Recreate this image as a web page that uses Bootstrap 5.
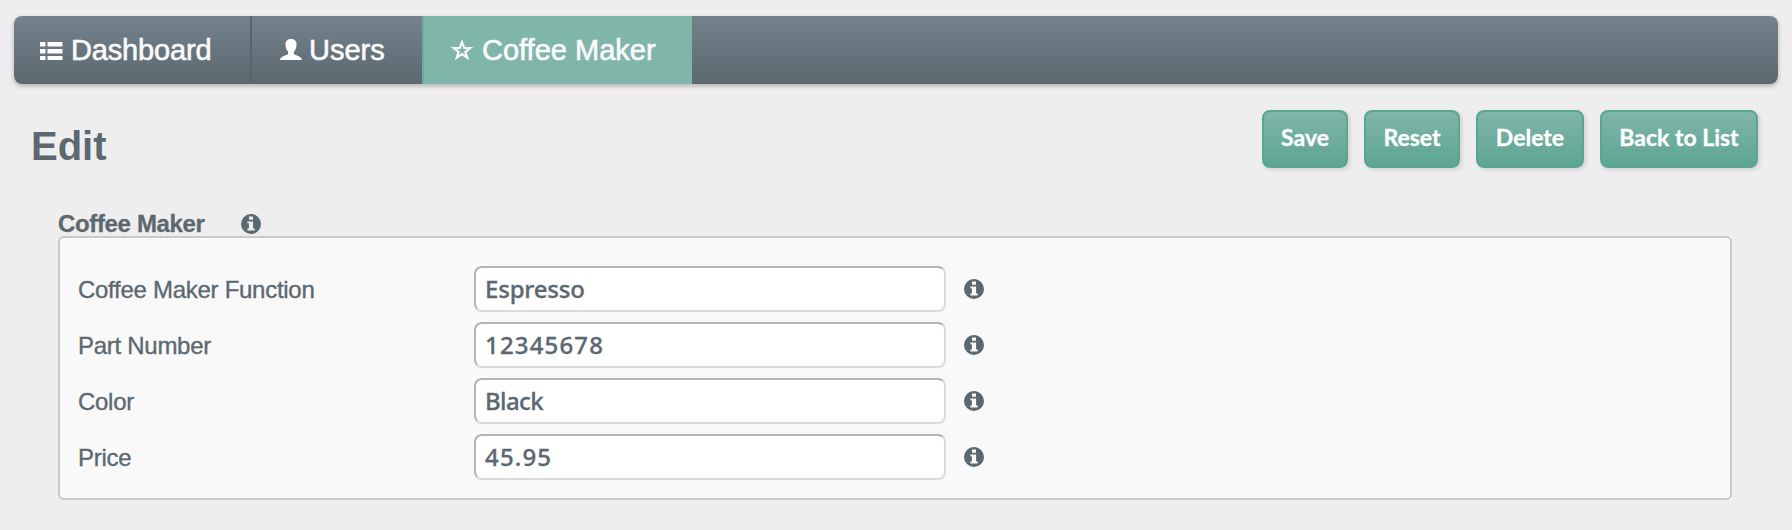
<!DOCTYPE html>
<html lang="en">
<head>
<meta charset="utf-8">
<meta name="viewport" content="width=device-width, initial-scale=1">
<title>Edit Coffee Maker</title>
<link rel="stylesheet" href="https://cdn.jsdelivr.net/npm/bootstrap@5.3.0/dist/css/bootstrap.min.css">
<style>
body{background:#eee;color:#5c6870;font-family:"Liberation Sans",Arial,sans-serif;font-size:24px;line-height:28px}
.main-bar{margin:16px 14px 0;height:68px;border-radius:8px;background:linear-gradient(#73828c,#5c6870);box-shadow:0 2px 5px rgba(0,0,0,.25);overflow:hidden}
.main-bar .nav-link{height:68px;color:#fafafa;font-size:29px;line-height:34px;padding:0;white-space:nowrap;-webkit-text-stroke:.6px #fafafa}
.main-bar .tab-dash{border-right:2px solid #58656d}
.main-bar .nav-link.active{background:#80b6a9;border-left:2px solid #6fa99b}
.main-bar svg{flex:none}
.main-bar span{margin-top:17px}
.tab-dash{width:238px;letter-spacing:-.15px}.tab-users{width:170px}.tab-coffee{width:270px}
.ico-list{margin:25px 8px 0 26px}.ico-user{margin:23px 7px 0 28px}.ico-star{margin:23px 9px 0 27px}
.page-head{padding:26px 34px 0 31px;height:122px}
h1{font-size:40px;line-height:46px;font-weight:700;margin:13px 0 0}
.btn-act{flex:none;height:58px;padding:0 0 3px;border:2px solid #5da593;border-radius:8px;background:linear-gradient(#80b6a9,#5da593);color:#fff;font-family:Lato,"Noto Sans",sans-serif;font-weight:700;font-size:23px;line-height:51px;-webkit-text-stroke:.3px #fff;box-shadow:2px 2px 4px rgba(0,0,0,.12);white-space:nowrap}
.w-save{width:86px}.w-reset{width:96px}.w-delete{width:108px}.w-back{width:158px}
.group-title{margin-left:58px;height:30px}
.group-title span{width:183px;margin-top:4px;font-weight:700;letter-spacing:-.35px;-webkit-text-stroke:.3px #5c6870}
.group-title svg{margin-top:8px}
.panel-box{margin:0 60px 0 58px;height:264px;border:2px solid #c9c9c9;border-radius:6px;background:#f9f9f9;padding:28px 18px 0;gap:10px}
.field-row{height:46px}
.field-row label{width:396px;padding-top:2px;letter-spacing:-.28px;-webkit-text-stroke:.35px #5c6870}
.field-row svg{margin:0 0 0 18px}
.field-row .form-control{width:472px;height:46px;padding:0 9px 2px;border:2px solid;border-color:#b5b5b5 #dadada #dadada #b5b5b5;border-radius:8px;background:#fff;color:#5c6870;font-family:"Noto Sans","Open Sans",sans-serif;font-weight:500;font-size:24px;line-height:40px;letter-spacing:-.2px;-webkit-text-stroke:.3px #5c6870}
.field-row .form-control.digits{letter-spacing:1.15px}
.field-row .form-control.tight{letter-spacing:-.6px}
</style>
</head>
<body>
<svg class="d-none">
  <symbol id="info" viewBox="0 0 20 20"><path fill="currentColor" fill-rule="evenodd" d="M10 0a10 10 0 1 1 0 20a10 10 0 1 1 0-20zM8 2.600v3.200h4V2.600zM6.400 7.400v1.800h1.500v5.200H6.400v2h7.300v-2h-1.600v-7z"/></symbol>
</svg>
<nav class="main-bar nav flex-nowrap">
  <a class="nav-link tab-dash d-flex" href="#"><svg class="ico-list" width="23" height="20" fill="#fff"><path d="M0 1h5.500v4.500H0zM7.500 1h15v4.500h-15zM0 8h5.500v4.500H0zM7.500 8h15v4.500h-15zM0 15h5.500v4H0zM7.500 15h15v4h-15z"/></svg><span>Dashboard</span></a>
  <a class="nav-link tab-users d-flex" href="#"><svg class="ico-user" width="22" height="21" fill="#fff"><path d="M11 0c4 0 5.800 2.500 5.500 6.300c-.2 3-1.200 5-2.600 6.300v2.200c0 1.300 7.800 2.200 8.100 6.200H0c.3-4 8.100-4.900 8.100-6.200v-2.200C6.700 11.300 5.700 9.300 5.500 6.300C5.200 2.500 7 0 11 0z"/></svg><span>Users</span></a>
  <a class="nav-link active tab-coffee d-flex" href="#"><svg class="ico-star" width="22" height="22" fill="none" stroke="#fafafa" stroke-width="2.200"><path d="M11 3.200L13.200 9H19.300L14.400 12.800L16.300 18.800L11 15.200L5.700 18.800L7.600 12.800L2.700 9H8.800z"/></svg><span>Coffee Maker</span></a>
</nav>
<header class="page-head d-flex justify-content-between align-items-start">
  <h1>Edit</h1>
  <div class="d-flex gap-3">
    <button type="button" class="btn btn-act w-save">Save</button>
    <button type="button" class="btn btn-act w-reset">Reset</button>
    <button type="button" class="btn btn-act w-delete">Delete</button>
    <button type="button" class="btn btn-act w-back">Back to List</button>
  </div>
</header>
<main>
  <div class="group-title d-flex"><span>Coffee Maker</span><svg width="20" height="20"><use href="#info"/></svg></div>
  <form class="panel-box d-flex flex-column">
    <div class="field-row d-flex align-items-center"><label for="f1">Coffee Maker Function</label><input id="f1" class="form-control" value="Espresso"><svg width="20" height="20"><use href="#info"/></svg></div>
    <div class="field-row d-flex align-items-center"><label for="f2">Part Number</label><input id="f2" class="form-control digits" value="12345678"><svg width="20" height="20"><use href="#info"/></svg></div>
    <div class="field-row d-flex align-items-center"><label for="f3">Color</label><input id="f3" class="form-control tight" value="Black"><svg width="20" height="20"><use href="#info"/></svg></div>
    <div class="field-row d-flex align-items-center"><label for="f4">Price</label><input id="f4" class="form-control digits" value="45.95"><svg width="20" height="20"><use href="#info"/></svg></div>
  </form>
</main>
<script src="https://cdn.jsdelivr.net/npm/bootstrap@5.3.0/dist/js/bootstrap.bundle.min.js"></script>
</body>
</html>
